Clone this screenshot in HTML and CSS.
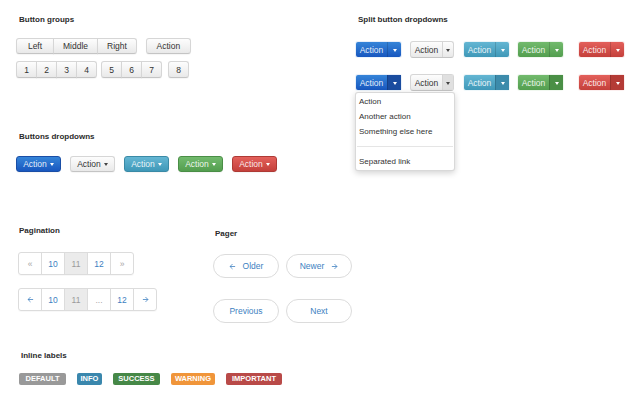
FILE: index.html
```html
<!DOCTYPE html>
<html>
<head>
<meta charset="utf-8">
<link rel="stylesheet" href="styles.css">
</head>
<body>
<div class="page">
  <section class="top">
    <div class="col-left">
      <h3 class="title">Button groups</h3>
      <div class="toolbar t1">
        <div class="btn-group"><span class="btn">Left</span><span class="btn">Middle</span><span class="btn">Right</span></div>
        <div class="btn-group"><span class="btn wide">Action</span></div>
      </div>
      <div class="toolbar t2">
        <div class="btn-group"><span class="btn">1</span><span class="btn">2</span><span class="btn">3</span><span class="btn">4</span></div>
        <div class="btn-group"><span class="btn">5</span><span class="btn">6</span><span class="btn">7</span></div>
        <div class="btn-group solo"><span class="btn">8</span></div>
      </div>
      <h3 class="title t-dd">Buttons dropdowns</h3>
      <div class="dd-row">
        <span class="btn dd primary">Action<i class="caret"></i></span>
        <span class="btn dd">Action<i class="caret"></i></span>
        <span class="btn dd info">Action<i class="caret"></i></span>
        <span class="btn dd success">Action<i class="caret"></i></span>
        <span class="btn dd danger">Action<i class="caret"></i></span>
      </div>
    </div>
    <div class="col-right">
      <h3 class="title">Split button dropdowns</h3>
      <div class="split-row r1">
        <div class="split primary"><span class="main">Action</span><span class="tog"><i class="caret"></i></span></div>
        <div class="split plain"><span class="main">Action</span><span class="tog"><i class="caret"></i></span></div>
        <div class="split info"><span class="main">Action</span><span class="tog"><i class="caret"></i></span></div>
        <div class="split success"><span class="main">Action</span><span class="tog"><i class="caret"></i></span></div>
        <div class="split danger"><span class="main">Action</span><span class="tog"><i class="caret"></i></span></div>
      </div>
      <div class="split-row r2">
        <div class="split primary has-menu"><span class="main">Action</span><span class="tog"><i class="caret"></i></span>
          <ul class="menu">
            <li>Action</li>
            <li>Another action</li>
            <li>Something else here</li>
            <li class="divider"></li>
            <li>Separated link</li>
          </ul>
        </div>
        <div class="split plain"><span class="main">Action</span><span class="tog"><i class="caret"></i></span></div>
        <div class="split info"><span class="main">Action</span><span class="tog"><i class="caret"></i></span></div>
        <div class="split success"><span class="main">Action</span><span class="tog"><i class="caret"></i></span></div>
        <div class="split danger"><span class="main">Action</span><span class="tog"><i class="caret"></i></span></div>
      </div>
    </div>
  </section>

  <section class="mid">
    <div class="pg-col">
      <h3 class="title">Pagination</h3>
      <ul class="pagination p1">
        <li class="muted">&laquo;</li>
        <li>10</li>
        <li class="active">11</li>
        <li>12</li>
        <li class="muted">&raquo;</li>
      </ul>
      <ul class="pagination p2">
        <li><svg class="arr" viewBox="0 0 8 8"><path d="M7 4H1.2M4 1.2L1.2 4L4 6.8" fill="none" stroke="currentColor" stroke-width="0.9"/></svg></li>
        <li>10</li>
        <li class="active">11</li>
        <li class="muted">...</li>
        <li>12</li>
        <li><svg class="arr" viewBox="0 0 8 8"><path d="M1 4H6.8M4 1.2L6.8 4L4 6.8" fill="none" stroke="currentColor" stroke-width="0.9"/></svg></li>
      </ul>
    </div>
    <div class="pager-col">
      <h3 class="title">Pager</h3>
      <div class="pager pg1">
        <span class="pill"><svg class="arr" viewBox="0 0 8 8"><path d="M7 4H1.2M4 1.2L1.2 4L4 6.8" fill="none" stroke="currentColor" stroke-width="0.9"/></svg>Older</span>
        <span class="pill">Newer<svg class="arr" viewBox="0 0 8 8"><path d="M1 4H6.8M4 1.2L6.8 4L4 6.8" fill="none" stroke="currentColor" stroke-width="0.9"/></svg></span>
      </div>
      <div class="pager pg2">
        <span class="pill">Previous</span>
        <span class="pill">Next</span>
      </div>
    </div>
  </section>

  <section class="labels-sec">
    <h3 class="title">Inline labels</h3>
    <div class="labels">
      <span class="label l-default">DEFAULT</span>
      <span class="label l-info">INFO</span>
      <span class="label l-success">SUCCESS</span>
      <span class="label l-warning">WARNING</span>
      <span class="label l-important">IMPORTANT</span>
    </div>
  </section>
</div>
</body>
</html>
```

FILE: styles.css
```css
html, body {
  margin: 0;
  padding: 0;
}
body {
  width: 640px;
  height: 401px;
  overflow: hidden;
  background: #fff;
  font-family: "Liberation Sans", Arial, Helvetica, sans-serif;
  color: #333;
}
.page {
  padding-top: 14px;
}
.title {
  margin: 0;
  font-size: 8px;
  font-weight: bold;
  line-height: 11px;
  color: #2b2b2b;
}

/* top section */
.top {
  display: flex;
}
.col-left {
  width: 339px;
  padding-left: 16px;
}
.col-left > .title,
.col-right > .title {
  padding-left: 3px;
}
.toolbar {
  display: flex;
}
.t1 {
  margin-top: 13px;
  gap: 9px;
}
.t2 {
  margin-top: 7px;
  gap: 4px;
}
.t2 .solo {
  margin-left: 2px;
}
.btn-group {
  display: flex;
}
.btn {
  display: inline-flex;
  align-items: center;
  justify-content: center;
  box-sizing: border-box;
  height: 16px;
  padding: 0 9px;
  min-width: 38px;
  font-size: 8.5px;
  color: #333;
  background: linear-gradient(#fdfdfd, #e9e9e9);
  border: 1px solid #d6d6d6;
  border-bottom-color: #c4c4c4;
  box-shadow: 0 1px 1px rgba(0, 0, 0, 0.04);
}
.btn.wide {
  min-width: 45px;
}
.btn-group .btn + .btn {
  margin-left: -1px;
}
.btn-group .btn:first-child {
  border-radius: 3px 0 0 3px;
}
.btn-group .btn:last-child {
  border-radius: 0 3px 3px 0;
}
.btn-group .btn:only-child {
  border-radius: 3px;
}
.t2 .btn {
  height: 17px;
  min-width: 0;
  padding: 0 7px;
  width: 21px;
}

.t-dd {
  margin-top: 53px;
}
.dd-row {
  display: flex;
  gap: 9px;
  margin-top: 14px;
}
.btn.dd {
  width: 45px;
  min-width: 0;
  height: 16px;
  padding: 0;
  font-size: 8.5px;
  border-radius: 3px;
}
.caret {
  display: inline-block;
  width: 0;
  height: 0;
  border-top: 3px solid #444;
  border-left: 2.5px solid transparent;
  border-right: 2.5px solid transparent;
  margin-left: 3px;
  margin-top: 1px;
}

/* colours */
.primary {
  background: linear-gradient(#3584d8, #1857bf);
  border-color: #1a4ea6;
  color: rgba(255, 255, 255, 0.9);
}
.info {
  background: linear-gradient(#64b6d3, #3f98b8);
  border-color: #3a8aa6;
  color: rgba(255, 255, 255, 0.9);
}
.success {
  background: linear-gradient(#72ba6d, #539e4f);
  border-color: #4a8e46;
  color: rgba(255, 255, 255, 0.9);
}
.danger {
  background: linear-gradient(#e3605b, #c4403b);
  border-color: #ae3a35;
  color: rgba(255, 255, 255, 0.9);
}
.primary .caret,
.info .caret,
.success .caret,
.danger .caret {
  border-top-color: #fff;
}

/* split buttons */
.col-right {
  flex: 1;
}
.split-row {
  display: grid;
  grid-template-columns: 55px 53px 54px 61px 45px;
  margin-top: 16px;
}
.split {
  display: flex;
  height: 17px;
  box-sizing: border-box;
  border: 1px solid;
  border-radius: 3px;
  font-size: 8.5px;
  width: max-content;
}
.split.plain {
  background: linear-gradient(#fdfdfd, #e9e9e9);
  border-color: #d6d6d6 #d6d6d6 #c4c4c4;
  color: #333;
}
.split .main {
  display: flex;
  align-items: center;
  justify-content: center;
  width: 31px;
}
.split .tog {
  display: flex;
  align-items: center;
  justify-content: center;
  width: 13px;
  border-left: 1px solid rgba(0, 0, 0, 0.15);
}
.split.plain .tog {
  width: 10px;
  border-left-color: #d6d6d6;
}
.split .tog .caret {
  margin: 1px 0 0 0;
}
.r2 .primary .tog {
  background: #1a4c9f;
}
.r2 .plain .tog {
  background: #e0e0e0;
}
.r2 .info .tog {
  background: #3c8bab;
}
.r2 .success .tog {
  background: #4a8f46;
}
.r2 .danger .tog {
  background: #b43b36;
}
.has-menu {
  position: relative;
}
.menu {
  position: absolute;
  top: 17px;
  left: -1px;
  width: 100px;
  box-sizing: border-box;
  margin: 0;
  padding: 1px 0;
  list-style: none;
  background: #fff;
  border: 1px solid rgba(0, 0, 0, 0.15);
  border-radius: 3px;
  box-shadow: 0 2px 6px rgba(0, 0, 0, 0.18);
  z-index: 2;
}
.menu li {
  height: 15px;
  line-height: 15px;
  padding-left: 3px;
  font-size: 8px;
  color: #333;
}
.menu li.divider {
  height: 1px;
  margin: 7px 1px;
  padding: 0;
  background: #e5e5e5;
}

/* pagination / pager */
.mid {
  display: flex;
  margin-top: 53px;
}
.pg-col {
  width: 195px;
  padding-left: 18px;
}
.pg-col > .title {
  padding-left: 1px;
}
.pagination {
  display: flex;
  width: max-content;
  margin: 0;
  padding: 0;
  list-style: none;
  border: 1px solid #dcdcdc;
  border-radius: 3px;
  box-shadow: 0 1px 1px rgba(0, 0, 0, 0.03);
}
.p1 {
  margin-top: 16px;
}
.p2 {
  margin-top: 13px;
}
.pagination li {
  display: flex;
  align-items: center;
  justify-content: center;
  width: 22px;
  height: 21px;
  font-size: 8.5px;
  color: #3d7fc1;
}
.pagination li + li {
  border-left: 1px solid #dcdcdc;
}
.pagination li.active {
  background: #ebebeb;
  color: #9a9a9a;
}
.pagination li.muted {
  color: #a5a5a5;
}
.arr {
  width: 7px;
  height: 7px;
  display: block;
}
.pager-col {
  margin-top: 3px;
}
.pager-col > .title {
  padding-left: 2px;
}
.pager {
  display: flex;
  gap: 7px;
}
.pg1 {
  margin-top: 15px;
}
.pg2 {
  margin-top: 21px;
}
.pill {
  display: flex;
  align-items: center;
  justify-content: center;
  gap: 7px;
  width: 66px;
  height: 24px;
  box-sizing: border-box;
  border: 1px solid #dcdcdc;
  border-radius: 12px;
  font-size: 8.5px;
  color: #3d7fc1;
  background: #fff;
}

/* labels */
.labels-sec {
  margin-top: 27px;
}
.labels-sec > .title {
  padding-left: 21px;
}
.labels {
  display: flex;
  gap: 11px;
  margin-top: 12px;
  padding-left: 19px;
}
.label {
  display: block;
  height: 12px;
  line-height: 12px;
  border-radius: 2px;
  text-align: center;
  font-size: 7.5px;
  font-weight: bold;
  color: #fff;
}
.l-default { width: 47px; background: #999; }
.l-info { width: 25px; background: #3a87ad; }
.l-success { width: 47px; background: #468847; }
.l-warning { width: 44px; background: #f0953a; }
.l-important { width: 56px; background: #b94a48; }
```
